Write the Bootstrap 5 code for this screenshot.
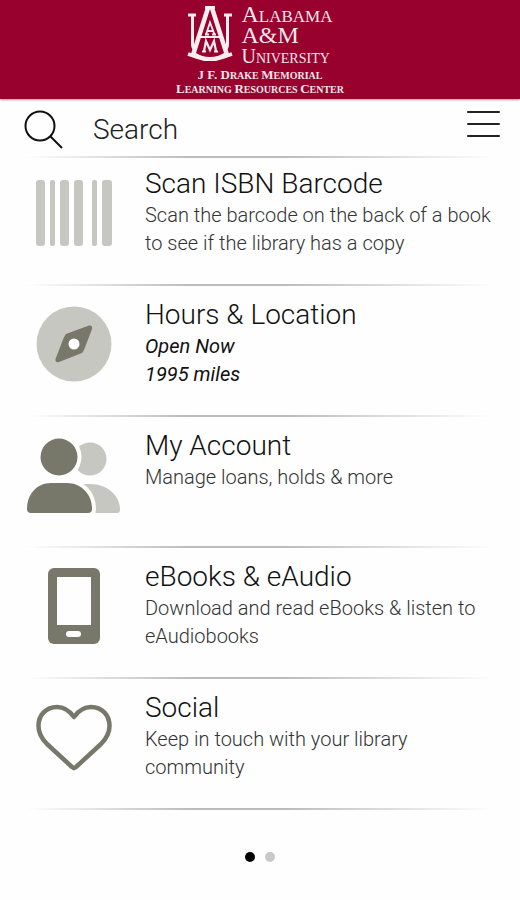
<!DOCTYPE html>
<html lang="en">
<head>
<meta charset="utf-8">
<meta name="viewport" content="width=device-width, initial-scale=1">
<title>Alabama A&amp;M University Library</title>
<link href="https://cdn.jsdelivr.net/npm/bootstrap@5.3.0/dist/css/bootstrap.min.css" rel="stylesheet">
<style>
  body { font-family: Roboto, "Liberation Sans", sans-serif; font-weight: 300; color: #111; background: #fefefe; }
  .brand-bar { background: #98002e; color: #f6e6ea; height: 99px; padding-top: 5px; font-family: "Liberation Serif", serif; box-shadow: 0 1px 2px #a99; }
  .brand-mark { width: 46px; height: 56px; }
  .brand-name { font-size: 17px; line-height: 19px; text-transform: uppercase; }
  .brand-name .cap { font-size: 24px; }
  .brand-name .univ { font-size: 14px; line-height: 18px; }
  .brand-name .univ .cap { font-size: 20px; }
  .brand-sub { font-size: 10px; line-height: 13px; font-weight: 700; text-transform: uppercase; }
  .brand-sub .cap { font-size: 13px; }
  .search-bar { height: 57px; padding: 0 20px 0 24px; }
  .search-field { min-width: 0; font-size: 28px; font-weight: 300; line-height: 32px; color: #222; margin-left: 30px; }
  .search-field::placeholder { color: #222; opacity: 1; }
  .fade-rule { height: 2px; margin: 0 26px; background: linear-gradient(90deg, transparent, #bbb 35%, #bbb 55%, transparent); }
  .entry { height: 129px; padding-top: 12px; color: #111; }
  .entry:hover { color: #000; }
  .entry-first { height: 126px; padding-top: 9px; }
  .entry-icon { width: 145px; }
  .entry-icon svg { margin-left: 26px; margin-top: 8px; }
  .entry-title { font-size: 28px; line-height: 34px; font-weight: 300; margin: 0; }
  .entry-text { font-size: 20px; line-height: 28px; color: #333; }
  .entry-text em { color: #111; font-weight: 400; }
  .pager { padding-top: 42px; gap: 10px; }
  .dot { width: 10px; height: 10px; background: #c8c8c8; }
  .dot-on { background: #000; }
</style>
</head>
<body>
<header class="brand-bar d-flex flex-column align-items-center">
  <div class="d-flex gap-2">
    <svg class="brand-mark" viewBox="0 0 46 56" fill="none" stroke="#fbeef1" aria-hidden="true">
      <path d="M1 10h8M5.500 10v29q0 4 2 5M37 10h8M40.500 10v29q0 4-2 5" stroke-width="3"/>
      <path d="M18 2.500h10" stroke-width="3"/>
      <path d="M21 3L6 50M25 3l15 47" stroke-width="4.500"/>
      <path d="M1 49l9 3M45 49l-9 3" stroke-width="3.500"/>
      <path d="M12 32h22" stroke-width="2"/>
      <path d="M7 48q16 10 32 0" stroke-width="2"/>
      <path d="M6 50q17 9 34 0" stroke-width="4"/>
      <path d="M18 29.500h4M25 29.500h4M19 29.500l4-12 4.500 12M20 26h6" stroke-width="1.800"/>
      <path d="M15 46.500h4M27 46.500h4M17 46l2-10 4 9 4-9 2 10" stroke-width="2.200"/>
    </svg>
    <div class="brand-name">
      <div><span class="cap">A</span>labama</div>
      <div><span class="cap">A&amp;M</span></div>
      <div class="univ"><span class="cap">U</span>niversity</div>
    </div>
  </div>
  <div class="brand-sub text-center">
    <div><span class="cap">J F. D</span>rake <span class="cap">M</span>emorial</div>
    <div><span class="cap">L</span>earning <span class="cap">R</span>esources <span class="cap">C</span>enter</div>
  </div>
</header>

<main>
  <form class="search-bar d-flex align-items-center" role="search">
    <label for="q" class="d-flex flex-shrink-0 mt-1" aria-label="Search">
      <svg width="39" height="39" viewBox="0 0 39 39" fill="none" stroke="#111" stroke-width="2"><circle cx="16" cy="16" r="14.500"/><path d="M26 26l12 12"/></svg>
    </label>
    <input id="q" type="search" class="search-field flex-grow-1 border-0 bg-transparent p-0 mt-1" placeholder="Search">
    <button type="button" class="btn p-0 border-0 d-flex flex-shrink-0 mb-2" aria-label="Menu">
      <svg width="33" height="28" viewBox="0 0 33 28" stroke="#222" stroke-width="2" stroke-linecap="round"><path d="M1 2h31M1 14h31M1 26h31"/></svg>
    </button>
  </form>
  <div class="fade-rule"></div>

  <a href="#scan" class="entry entry-first d-flex text-decoration-none">
    <div class="entry-icon flex-shrink-0"><svg width="96" height="78" viewBox="0 0 96 78" fill="#c7c7c1"><rect x="10" y="5" width="9" height="66" rx="3"/><rect x="24" y="5" width="5" height="66" rx="2"/><rect x="34" y="5" width="9" height="66" rx="3"/><rect x="48" y="5" width="9" height="66" rx="3"/><rect x="66" y="5" width="5" height="66" rx="2"/><rect x="76" y="5" width="10" height="66" rx="3"/></svg></div>
    <div class="pe-3"><h2 class="entry-title">Scan ISBN Barcode</h2><div class="entry-text">Scan the barcode on the back of a book to see if the library has a copy</div></div>
  </a>
  <div class="fade-rule"></div>

  <a href="#hours" class="entry d-flex text-decoration-none">
    <div class="entry-icon flex-shrink-0"><svg width="96" height="78" viewBox="0 0 96 78"><circle cx="48" cy="38" r="37.500" fill="#c7c7c1"/><path d="M40 28L63 19.500Q67 19 66 23L58 44 56 47 33 56Q29 57 29.500 53L38 31Z" fill="#77776a"/><circle cx="48" cy="38" r="5.500" fill="#fff"/></svg></div>
    <div class="pe-3"><h2 class="entry-title">Hours &amp; Location</h2><div class="entry-text"><em>Open Now<br>1995 miles</em></div></div>
  </a>
  <div class="fade-rule"></div>

  <a href="#account" class="entry d-flex text-decoration-none">
    <div class="entry-icon flex-shrink-0"><svg width="96" height="78" viewBox="0 0 96 78"><g fill="#c7c7c1"><circle cx="64" cy="22" r="16.500"/><path d="M55 47h9c17 0 30 11 30 26q0 3-3 3H60Z"/></g><g fill="#77776a" stroke="#fefefe" stroke-width="8" paint-order="stroke"><circle cx="33" cy="20" r="18.500"/><path d="M25 46h16c14 0 25 11 25 26q0 4-4 4H5q-4 0-4-4C1 57 11 46 25 46Z"/></g></svg></div>
    <div class="pe-3"><h2 class="entry-title">My Account</h2><div class="entry-text">Manage loans, holds &amp; more</div></div>
  </a>
  <div class="fade-rule"></div>

  <a href="#ebooks" class="entry d-flex text-decoration-none">
    <div class="entry-icon flex-shrink-0"><svg width="96" height="78" viewBox="0 0 96 78"><rect x="22" y="0" width="52" height="76" rx="6" fill="#77776a"/><rect x="31" y="9" width="34" height="48" fill="#fefefe"/><rect x="40" y="63" width="15" height="6" rx="3" fill="#fefefe"/></svg></div>
    <div class="pe-3"><h2 class="entry-title">eBooks &amp; eAudio</h2><div class="entry-text">Download and read eBooks &amp; listen to eAudiobooks</div></div>
  </a>
  <div class="fade-rule"></div>

  <a href="#social" class="entry d-flex text-decoration-none">
    <div class="entry-icon flex-shrink-0"><svg width="96" height="78" viewBox="0 0 96 78" fill="none" stroke="#77776a" stroke-width="4.500" stroke-linejoin="round"><path d="M48 18C43 11 37 8 31 8 20 8 12.500 16 12.500 27c0 8 3.500 13 8.500 18l25 23q2 2 4 0l25-23c5-5 8.500-10 8.500-18C83.500 16 76 8 65 8 59 8 53 11 48 18Z"/></svg></div>
    <div class="pe-3"><h2 class="entry-title">Social</h2><div class="entry-text">Keep in touch with your library community</div></div>
  </a>
  <div class="fade-rule"></div>

  <nav class="pager d-flex justify-content-center" aria-label="Pages">
    <button type="button" class="dot dot-on border-0 rounded-circle p-0" aria-label="Page 1"></button>
    <button type="button" class="dot border-0 rounded-circle p-0" aria-label="Page 2"></button>
  </nav>
</main>
<script src="https://cdn.jsdelivr.net/npm/bootstrap@5.3.0/dist/js/bootstrap.bundle.min.js"></script>
</body>
</html>
